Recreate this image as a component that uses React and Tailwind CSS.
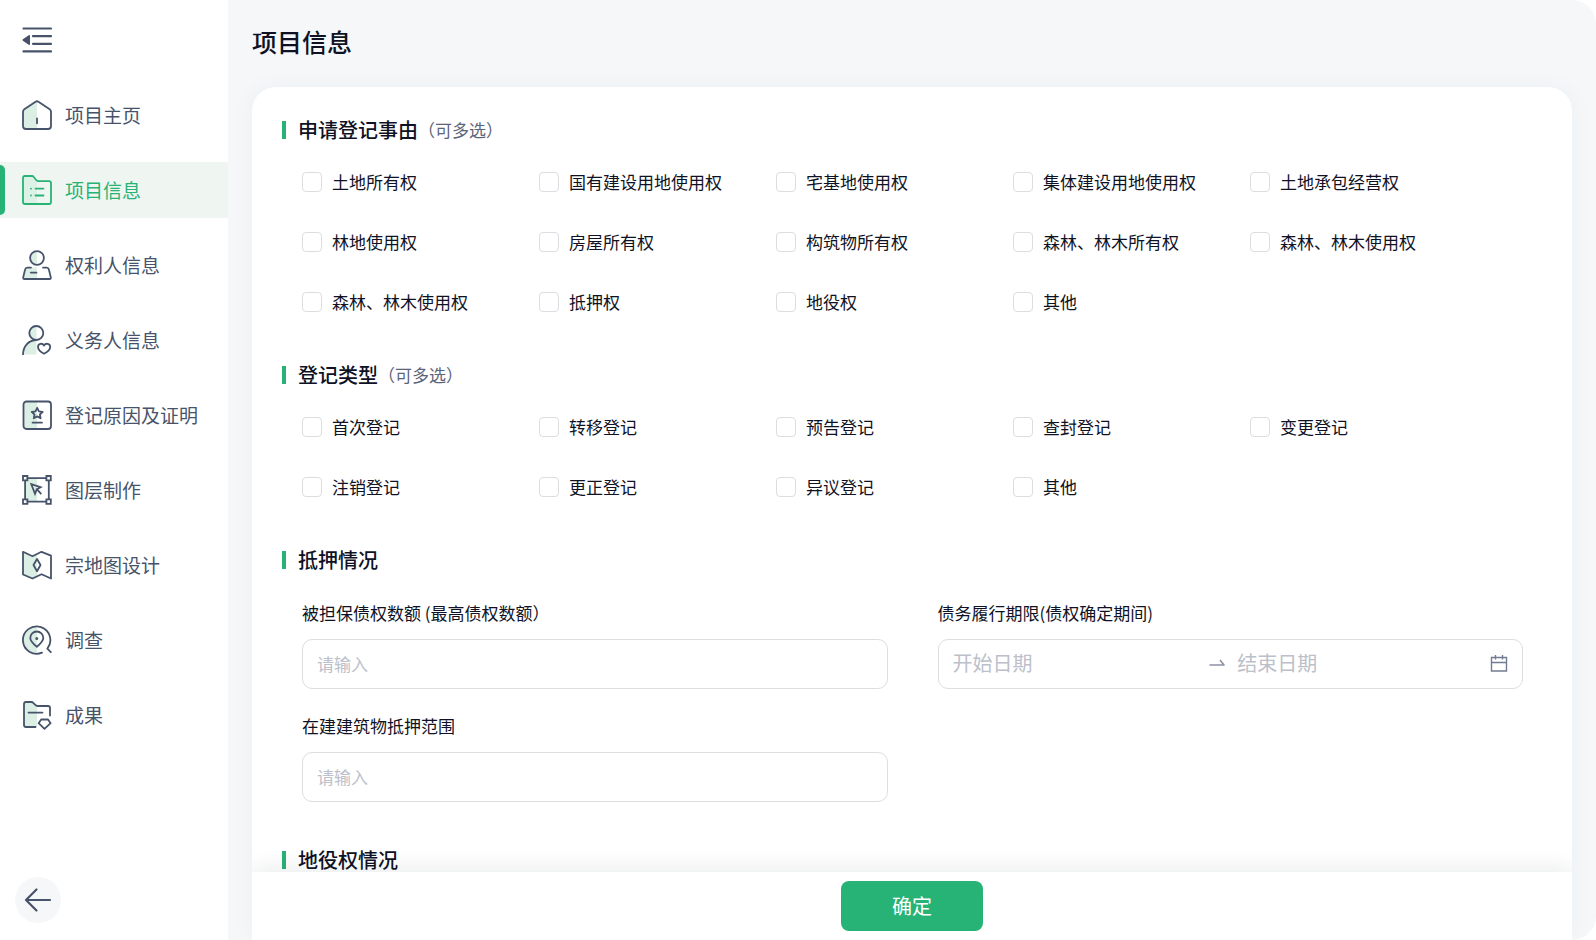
import React from "react";

const S = ({ children, ...props }) => (
  <svg
    viewBox="0 0 30 30"
    className="size-[30px] shrink-0"
    fill="none"
    stroke="currentColor"
    strokeWidth="1.8"
    strokeLinecap="round"
    strokeLinejoin="round"
    aria-hidden="true"
    {...props}
  >
    {children}
  </svg>
);

const TINT = "#dcefe4";

const HomeIcon = () => (
  <S>
    <path d="M15 1.2 2.4 9.4Q1.2 10.2 1.2 11.6V26.500Q1.200 28.800 3.500 28.800H15Z" fill={TINT} stroke="none" />
    <path d="M13.600 1.700Q15 .8 16.400 1.700L27.700 9.200Q29 10.100 29 11.700V26Q29 29 26 29H4Q1 29 1 26V11.700Q1 10.100 2.300 9.200Z" />
    <path d="M15 18.500V23.300" />
  </S>
);

const InfoIcon = () => (
  <S>
    <path d="M1 3Q1 1 3 1H10.500L15 6.200V29H3Q1 29 1 27Z" fill="#ddf2e6" stroke="none" />
    <path d="M3 1H10Q11 1 11.600 1.800L14.400 5.300Q15 6.100 16 6.100H27Q29 6.100 29 8.100V27Q29 29 27 29H3Q1 29 1 27V3Q1 1 3 1Z" />
    <path d="M9 13.600V13.700M13.500 13.600H21.500M9 20.500V20.600M13.500 20.500H21.500" />
  </S>
);

const HolderIcon = () => (
  <S>
    <path d="M15 1A7 7 0 0 0 15 15ZM4 17.500H15V29H1Z" fill={TINT} stroke="none" />
    <circle cx="15" cy="8" r="6.900" />
    <path d="M9 17.600H5.400Q3.500 17.600 3.100 19.500L1.200 27.400Q.9 29 2.500 29H27.500Q29.100 29 28.800 27.400L26.900 19.500Q26.500 17.600 24.600 17.600H21" />
    <path d="M8.800 22.600H14.500" />
  </S>
);

const ObligorIcon = () => (
  <S>
    <path d="M14.500 1A7 7 0 0 0 14.500 15ZM14.500 15.500Q3 17 1 29.500H14.500Z" fill={TINT} stroke="none" />
    <circle cx="14.300" cy="8" r="7" />
    <path d="M1 29.500C1.200 21 6.500 15.800 13.500 15" />
    <path d="M22 28.700C18.500 26.800 16 24.600 16 21.900C16 18.500 20.300 17.600 22 20.600C23.700 17.600 28.200 18.500 28.200 21.900C28.200 24.600 25.500 26.800 22 28.700Z" />
  </S>
);

const ReasonIcon = () => (
  <S>
    <path d="M1.500 4Q1.500 1.500 4 1.500H15V29H4Q1.500 29 1.500 26.500Z" fill={TINT} stroke="none" />
    <rect x="1.500" y="1.500" width="27.500" height="27.500" rx="3" />
    <path d="m15.200 7.800 1.700 3.500 3.800.5-2.800 2.700.7 3.800-3.400-1.900-3.400 1.900.7-3.800-2.800-2.700 3.800-.5Z" />
    <path d="M10.500 22.600H20" />
  </S>
);

const LayerIcon = () => (
  <S strokeLinecap="butt" strokeLinejoin="miter">
    <path d="M3 3H15V27H3Z" fill={TINT} stroke="none" />
    <path d="M5.500 3.100H24.500M5.500 26.700H24.500M3.100 5.500V24.500M26.800 5.500V24.500" />
    <path d="M1 1H5.400V5.400H1ZM24.400 1H28.800V5.400H24.400ZM1 24.400H5.400V28.800H1ZM24.400 24.400H28.800V28.800H24.400Z" />
    <path d="M9.300 9.200 18.600 12.200 14.800 14.200 13 18.800ZM14.800 14.200 19.300 19.200" />
  </S>
);

const MapIcon = () => (
  <S>
    <path d="M1 2 10.500 6.500 15 4.500V25.500L10.500 28.500 1 25Z" fill={TINT} stroke="none" />
    <path d="M1 1.800 10.500 6.200 19.500 1.800 29 5.600V28.500L19.500 24.200 10.500 28.500 1 24.500Z" />
    <path d="M15 9 18.500 15 15 21.300 11.500 15Z" />
  </S>
);

const SurveyIcon = () => (
  <S>
    <path d="M15 1A13.500 13.500 0 0 0 15 28Z" fill={TINT} stroke="none" />
    <path d="M20 27.700A13.700 13.700 0 1 1 25.300 23.700L28.800 27.200" />
    <path d="M14.800 21.800C11 18.700 8.300 16.200 8.300 13A6.500 6.500 0 0 1 21.300 13C21.300 16.200 18.500 18.700 14.800 21.800Z" />
    <circle cx="14.800" cy="13.600" r=".6" fill="currentColor" />
  </S>
);

const ResultIcon = () => (
  <S>
    <path d="M2 3.500Q2 2 3.500 2H10L15 6V27H4Q2 27 2 25Z" fill={TINT} stroke="none" />
    <path d="M13.500 27H4Q2 27 2 25V4Q2 2 4 2H9.500Q10.500 2 11.200 2.800L13.600 5.200Q14.300 6 15.300 6H26Q28 6 28 8V15.500" />
    <path d="M6.500 12.600H20.500" />
    <path d="M19.200 19.500H26L28.600 23.200 22.500 28.800 16.600 23.200Z" />
  </S>
);

const NAV = [
  ["项目主页", HomeIcon],
  ["项目信息", InfoIcon],
  ["权利人信息", HolderIcon],
  ["义务人信息", ObligorIcon],
  ["登记原因及证明", ReasonIcon],
  ["图层制作", LayerIcon],
  ["宗地图设计", MapIcon],
  ["调查", SurveyIcon],
  ["成果", ResultIcon],
];

const REASONS = [
  "土地所有权", "国有建设用地使用权", "宅基地使用权", "集体建设用地使用权", "土地承包经营权",
  "林地使用权", "房屋所有权", "构筑物所有权", "森林、林木所有权", "森林、林木使用权",
  "森林、林木使用权", "抵押权", "地役权", "其他",
];

const TYPES = [
  "首次登记", "转移登记", "预告登记", "查封登记", "变更登记",
  "注销登记", "更正登记", "异议登记", "其他",
];

function Heading({ children, note }) {
  return (
    <h2 className="flex h-7 items-center text-xl font-medium text-[#0f1225]">
      <span className="mr-3 h-[18px] w-1 bg-[#27b376]" />
      {children}
      {note && <span className="text-[17px] font-normal text-[#5b6479]">{note}</span>}
    </h2>
  );
}

function Choices({ items }) {
  return (
    <div className="mt-6 grid grid-cols-5 gap-y-8 pr-[55px] pl-5">
      {items.map((item, i) => (
        <label key={i} className="flex h-7 items-center gap-2.5 text-[17px] whitespace-nowrap">
          <input
            type="checkbox"
            className="size-5 shrink-0 appearance-none rounded-sm border border-[#dcdde1] bg-white checked:border-[#27b376] checked:bg-[#27b376]"
          />
          {item}
        </label>
      ))}
    </div>
  );
}

const BOX = "h-[50px] w-full rounded-[10px] border border-[#dcdee0] bg-white px-3.5 pb-0.5 placeholder:text-[#bcc0ca]";

function TextField({ id, label }) {
  return (
    <div>
      <label htmlFor={id} className="flex h-6 items-center text-[17px]">{label}</label>
      <input id={id} type="text" placeholder="请输入" className={`${BOX} mt-3.5 block text-[17px]`} />
    </div>
  );
}

export default function App() {
  return (
    <div className="flex h-screen overflow-hidden bg-white font-['Noto_Sans_CJK_SC',sans-serif] text-[#0f1225]">
      <aside className="flex w-[228px] shrink-0 flex-col text-[#46536a]">
        <button type="button" aria-label="收起菜单" className="mt-[25px] ml-[22px] size-[30px]">
          <S strokeWidth="2.2">
            <path d="M1.500 3.500H29M11 11.200H29M11 18.800H29M1.500 26.400H29" />
            <path d="M1.300 15 7.200 10.800V19.200Z" fill="currentColor" strokeWidth="1.6" />
          </S>
        </button>
        <nav className="mt-8 flex flex-col gap-[19px]">
          {NAV.map(([label, Icon], i) => (
            <a
              key={label}
              href="#"
              aria-current={i === 1 ? "page" : undefined}
              className={`flex h-14 items-center text-[19px] ${i === 1 ? "bg-[#eff6f2] text-[#27b376]" : ""}`}
            >
              <span className={`mr-[17px] h-[50px] w-[5px] rounded-r-md ${i === 1 ? "bg-[#27b376]" : ""}`} />
              <Icon />
              <span className="ml-[13px]">{label}</span>
            </a>
          ))}
        </nav>
        <button
          type="button"
          aria-label="返回"
          className="mt-auto mb-[17px] ml-[15px] flex size-[46px] items-center justify-center rounded-full bg-[#f5f7f9]"
        >
          <S strokeWidth="2.2">
            <path d="M27 15H3M13.500 4.500 3 15 13.500 25.500" />
          </S>
        </button>
      </aside>

      <main className="flex min-w-0 flex-1 flex-col rounded-r-3xl bg-[#f5f7f9] px-6">
        <h1 className="flex h-[87px] shrink-0 items-center pb-1 text-[25px] font-medium">项目信息</h1>
        <form className="flex min-h-0 flex-1 flex-col overflow-hidden rounded-t-3xl bg-white shadow-[0_0_24px_rgba(30,70,70,0.04)]">
          <div className="min-h-0 flex-1 overflow-x-hidden overflow-y-auto px-[30px] pt-[29px] [scrollbar-width:none]">
            <section>
              <Heading note="（可多选）">申请登记事由</Heading>
              <Choices items={REASONS} />
            </section>
            <section className="mt-[45px]">
              <Heading note="（可多选）">登记类型</Heading>
              <Choices items={TYPES} />
            </section>
            <section className="mt-[45px]">
              <Heading>抵押情况</Heading>
              <div className="mt-[27px] grid grid-cols-2 gap-x-[50px] gap-y-[25px] pr-[19px] pl-5">
                <TextField id="amount" label="被担保债权数额 (最高债权数额）" />
                <div>
                  <label htmlFor="start" className="flex h-6 items-center text-[17px]">债务履行期限(债权确定期间)</label>
                  <div className={`${BOX} mt-3.5 flex items-center text-xl`}>
                    <input id="start" type="text" placeholder="开始日期" className="w-0 flex-1 placeholder:text-[#bcc0ca]" />
                    <svg viewBox="0 0 16 16" className="mr-3 ml-1 size-4 shrink-0" fill="none" stroke="#8d93a3" strokeWidth="1.6" aria-hidden="true">
                      <path d="M.5 10H15L11 5" strokeLinejoin="round" />
                    </svg>
                    <input type="text" aria-label="结束日期" placeholder="结束日期" className="w-0 flex-1 placeholder:text-[#bcc0ca]" />
                    <svg viewBox="0 0 18 20" className="h-5 w-[18px] shrink-0" fill="none" stroke="#717c93" strokeWidth="1.4" aria-hidden="true">
                      <path d="M1.500 4.500H16.500V18H1.500ZM1.500 9.500H16.500M5.500 2V6.500M12.500 2V6.500" />
                    </svg>
                  </div>
                </div>
                <TextField id="scope" label="在建建筑物抵押范围" />
              </div>
            </section>
            <section className="mt-11">
              <Heading>地役权情况</Heading>
            </section>
          </div>
          <div className="flex h-[68px] shrink-0 justify-center bg-white pt-[9px] shadow-[0_-4px_20px_rgba(30,40,60,0.09)]">
            <button type="submit" className="h-[50px] w-[142px] rounded-lg bg-[#27b376] text-xl text-white">确定</button>
          </div>
        </form>
      </main>
    </div>
  );
}
